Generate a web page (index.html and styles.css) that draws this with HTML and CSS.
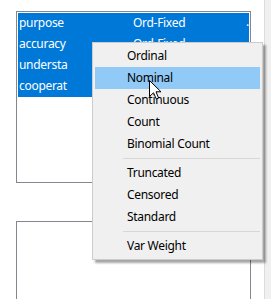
FILE: index.html
```html
<!DOCTYPE html>
<html lang="en">
  <head>
    <meta charset="UTF-8" />
    <title>Variable Types</title>
    <link rel="stylesheet" href="styles.css">
  </head>
  <body>
    <div class="main">
      <div class="listbox">
        <div class="row"><span class="name">purpose</span><span class="type">Ord-Fixed</span><span class="more">.</span></div>
        <div class="row"><span class="name">accuracy</span><span class="type">Ord-Fixed</span><span class="more">.</span></div>
        <div class="row"><span class="name">understa</span><span class="type">Ord-Fixed</span><span class="more">.</span></div>
        <div class="row"><span class="name">cooperat</span><span class="type">Ord-Fixed</span><span class="more">.</span></div>
      </div>
      <div class="listbox listbox-lower"></div>
    </div>
    <div class="strip"></div>

    <ul class="menu">
      <li>Ordinal</li>
      <li class="active">Nominal</li>
      <li>Continuous</li>
      <li>Count</li>
      <li>Binomial Count</li>
      <li class="sep"></li>
      <li>Truncated</li>
      <li>Censored</li>
      <li>Standard</li>
      <li class="sep"></li>
      <li>Var Weight</li>
    </ul>

    <svg class="cursor" width="13" height="20" viewBox="0 0 13 20">
      <path d="M0.5 0.5 L0.5 16.5 L4.5 12.8 L7.3 19 L9.6 18 L7 11.8 L12 11.8 Z" fill="#fff" stroke="#000" stroke-width="1" stroke-linejoin="miter"/>
    </svg>
  </body>
</html>
```

FILE: styles.css
```css
body {
  margin: 0;
  width: 271px;
  height: 299px;
  overflow: hidden;
  background-color: #fff;
  font-family: "Noto Sans", "Open Sans", sans-serif;
  font-size: 12px;
  letter-spacing: -0.3px;
  display: flex;
}

.main {
  width: 264px;
  padding: 11px 0 0 16px;
  box-sizing: border-box;
}

.strip {
  flex: 1;
  border-left: 1px solid #dcdcdc;
  background-color: #f0f0f0;
}

.listbox {
  width: 235px;
  height: 172px;
  border: 1px solid #828790;
  padding: 1px;
  box-sizing: border-box;
  overflow: hidden;
}

.listbox-lower {
  margin-top: 38px;
  height: 78px;
  border-bottom: none;
}

.row {
  display: flex;
  height: 21px;
  line-height: 20px;
  background-color: #0078d7;
  color: #fff;
  white-space: nowrap;
}

.name {
  width: 114px;
  padding-left: 1px;
}

.type {
  width: 113px;
}

.more {
  width: 3px;
  overflow: hidden;
  line-height: 17px;
}

.menu {
  position: absolute;
  left: 92px;
  top: 42px;
  width: 171px;
  margin: 0;
  padding: 2px;
  box-sizing: border-box;
  list-style: none;
  background-color: #f0f0f0;
  border: 1px solid #cccccc;
  box-shadow: 3px 3px 2px rgba(0, 0, 0, 0.35);
  color: #000;
}

.menu li {
  height: 22px;
  line-height: 22px;
  padding-left: 32px;
}

.menu li.active {
  background-color: #91c9f7;
}

.menu li.sep {
  height: 7px;
  padding: 0;
  margin-left: 28px;
  background: linear-gradient(#f0f0f0 3px, #d7d7d7 3px, #d7d7d7 4px, #f0f0f0 4px);
}

.cursor {
  position: absolute;
  left: 149px;
  top: 80px;
}
```
